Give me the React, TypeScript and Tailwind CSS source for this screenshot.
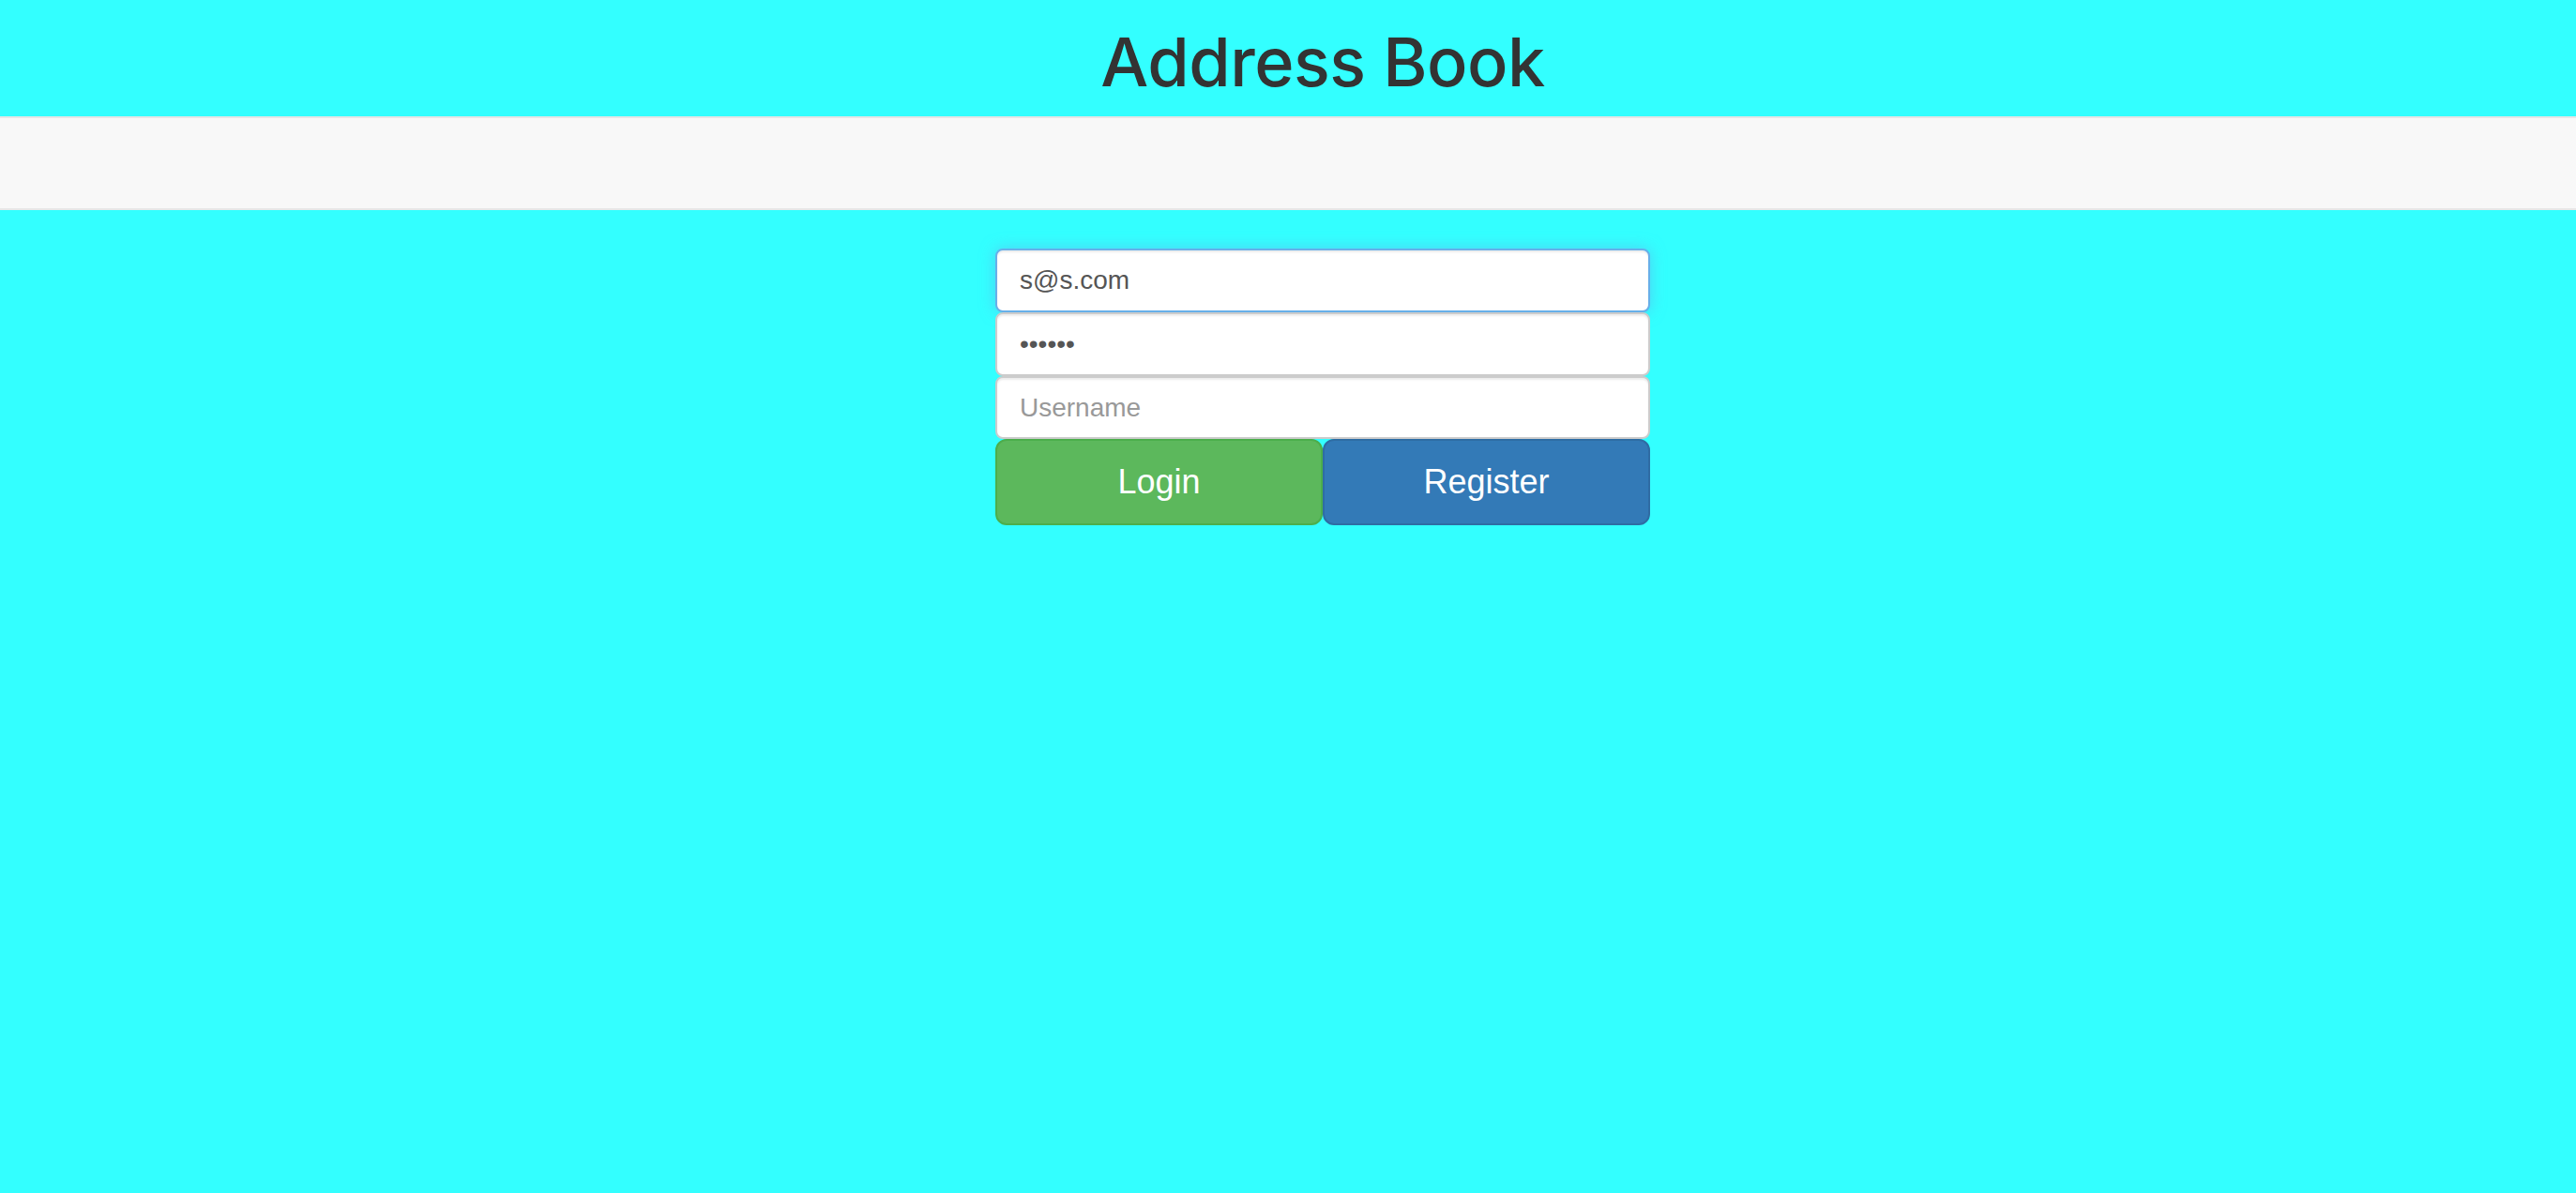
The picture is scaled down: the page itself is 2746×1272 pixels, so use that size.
import React, { useState } from "react";

const font = { fontFamily: '"Liberation Sans", Arial, Helvetica, sans-serif' };
const titleFont = { fontFamily: 'Inter, "Liberation Sans", Arial, sans-serif' };

const App: React.FC = () => {
  const [email, setEmail] = useState("s@s.com");
  const [password, setPassword] = useState("123456");
  const [username, setUsername] = useState("");

  return (
    <div
      className="min-h-[1272px] w-full bg-[#33ffff] text-[#333]"
      style={font}
    >
      {/* title */}
      <header className="h-[124px] pt-[26px] pl-[74px] flex justify-center">
        <h1
          className="text-[72px] leading-[80px] font-medium tracking-[-0.5px] text-[#333]"
          style={titleFont}
        >
          Address Book
        </h1>
      </header>

      {/* empty navbar */}
      <nav className="h-[100px] w-full bg-[#f8f8f8] border-y-2 border-[#e7e7e7]" />

      {/* login form */}
      <main className="mt-[41px] pl-[74px] flex justify-center">
        <form
          className="w-[698px] flex flex-col"
          onSubmit={(e) => e.preventDefault()}
        >
          <input
            type="email"
            value={email}
            onChange={(e) => setEmail(e.target.value)}
            className="h-[68px] w-full rounded-[8px] border-2 border-[#66afe9] bg-white px-[24px] text-[28px] text-[#555] outline-none shadow-[inset_0_2px_2px_rgba(0,0,0,0.075),0_0_16px_rgba(102,175,233,0.6)]"
          />
          <input
            type="password"
            value={password}
            onChange={(e) => setPassword(e.target.value)}
            className="h-[68px] w-full rounded-[8px] border-2 border-[#ccc] bg-white px-[24px] text-[28px] text-[#555] outline-none shadow-[inset_0_2px_2px_rgba(0,0,0,0.075)]"
          />
          <input
            type="text"
            placeholder="Username"
            value={username}
            onChange={(e) => setUsername(e.target.value)}
            className="h-[67px] w-full rounded-[8px] border-2 border-[#ccc] bg-white px-[24px] text-[28px] text-[#555] placeholder:text-[#999] outline-none shadow-[inset_0_2px_2px_rgba(0,0,0,0.075)]"
          />
          <div className="flex">
            <button
              type="submit"
              className="h-[92px] w-1/2 rounded-[12px] border-2 border-[#4cae4c] bg-[#5cb85c] text-[36px] text-white"
            >
              Login
            </button>
            <button
              type="button"
              className="h-[92px] w-1/2 rounded-[12px] border-2 border-[#2e6da4] bg-[#337ab7] text-[36px] text-white"
            >
              Register
            </button>
          </div>
        </form>
      </main>
    </div>
  );
};

export default App;
